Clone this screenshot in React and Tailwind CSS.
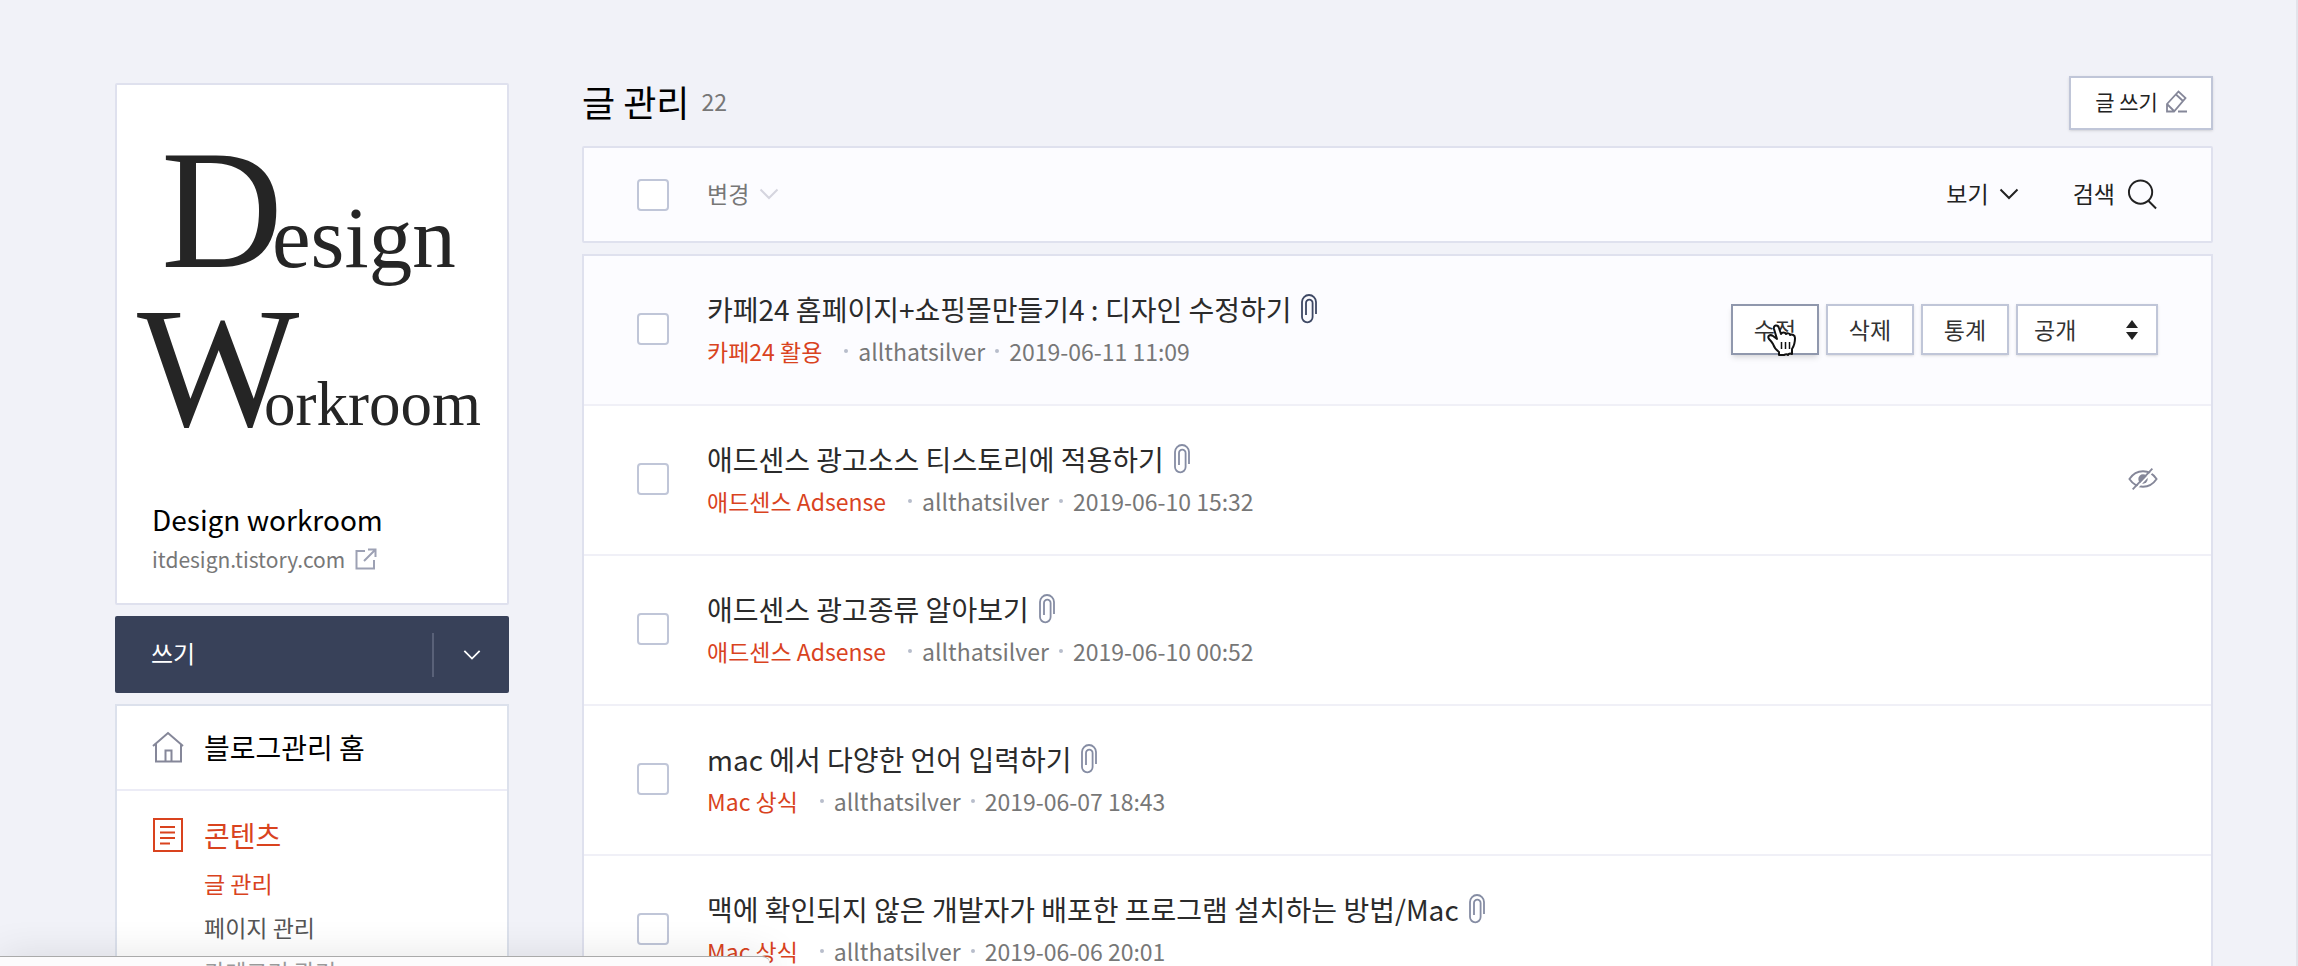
import React from "react";

const posts = [
  { title: "카페24 홈페이지+쇼핑몰만들기4 : 디자인 수정하기", category: "카페24 활용", date: "2019-06-11 11:09", active: true },
  { title: "애드센스 광고소스 티스토리에 적용하기", category: "애드센스 Adsense", date: "2019-06-10 15:32", hidden: true },
  { title: "애드센스 광고종류 알아보기", category: "애드센스 Adsense", date: "2019-06-10 00:52" },
  { title: "mac 에서 다양한 언어 입력하기", category: "Mac 상식", date: "2019-06-07 18:43" },
  { title: "맥에 확인되지 않은 개발자가 배포한 프로그램 설치하는 방법/Mac", category: "Mac 상식", date: "2019-06-06 20:01" },
];

const Chevron = ({ className }) => (
  <svg className={className} width="20" height="12" viewBox="0 0 20 12" fill="none" stroke="currentColor" strokeWidth="2">
    <path d="M1.5 1.5 10 10l8.5-8.5" />
  </svg>
);

const Clip = ({ className }) => (
  <svg className={className} width="16" height="30" viewBox="0 0 16 30" fill="none" stroke="currentColor" strokeWidth="1.8">
    <path d="M15 20V8a7 7 0 0 0-14 0v15a5.3 5.3 0 0 0 10.6 0V9a3.3 3.3 0 0 0-6.6 0v12" />
  </svg>
);

const Checkbox = ({ label }) => (
  <input
    type="checkbox"
    aria-label={label}
    className="size-8 shrink-0 appearance-none rounded border-2 border-[#c0c6d8] bg-white"
  />
);

const Dot = () => <span className="mx-2.5 size-1 rounded-full bg-[#b8bdcb]" />;

const Logo = () => (
  <svg className="block w-full overflow-visible" height="300" viewBox="0 0 390 300" fill="#252525" fontFamily="'Liberation Serif', serif">
    <text x="44" y="122" fontSize="169">D</text>
    <text x="155" y="122" fontSize="87">esign</text>
    <text x="20" y="280" fontSize="172">W</text>
    <text x="147" y="280" fontSize="63">orkroom</text>
  </svg>
);

const Hand = () => (
  <svg className="pointer-events-none absolute top-5 left-9" width="30" height="32" viewBox="0 0 30 32" fill="white" stroke="#111" strokeWidth="2" strokeLinejoin="round">
    <path d="M12 31v-3c-3-2-5-5-6-8-1-2-3-4-4-5-2-3 1-5 4-3l4 3L7 5c-1-4 4-5 5-1l2 6c1-2 4-2 5 0 1-1 4-1 4 1 2-1 5 0 5 3 0 5-1 8-3 11v5c-2-1-3-1-4 1-1-1-2-1-4 0z" />
    <path d="M14.500 18v7M18.500 18v7M22.500 18v7" strokeWidth="1.500" />
  </svg>
);

const actionClass =
  "h-[51px] w-22 border-2 border-[#c0c6d8] bg-white text-[23px] leading-8 text-[#333] shadow-sm";

const Actions = () => (
  <div className="flex gap-[7px]">
    <div className="relative">
      <button className="h-[51px] w-22 border-2 border-[#9098ad] bg-white text-[23px] leading-8 text-[#333] shadow-md">수정</button>
      <Hand />
    </div>
    <button className={actionClass}>삭제</button>
    <button className={actionClass}>통계</button>
    <div className="relative">
      <select aria-label="공개 설정" className="h-[51px] w-[142px] appearance-none border-2 border-[#c0c6d8] bg-white pl-4 text-[23px] leading-8 text-[#333] shadow-sm">
        <option>공개</option>
      </select>
      <svg className="pointer-events-none absolute top-4 right-5" width="12" height="20" viewBox="0 0 12 20" fill="#222">
        <path d="M6 0l6 8H0zM6 20l6-8H0z" />
      </svg>
    </div>
  </div>
);

const EyeOff = () => (
  <svg width="30" height="24" viewBox="0 0 32 24" fill="none" stroke="#858799" strokeWidth="2">
    <path d="M1.5 12C9 1 23 1 30.5 12 23 23 9 23 1.5 12z" />
    <circle cx="16" cy="12" r="5" fill="#858799" stroke="none" />
    <path d="M7 24 28 2" stroke="white" strokeWidth="2" />
    <path d="M5 23 26 1" />
  </svg>
);

const Sidebar = () => (
  <aside className="mt-[83px] w-[394px] shrink-0">
    <section className="h-[522px] rounded-xs border-2 border-[#dfe1ee] bg-white pt-[60px]">
      <Logo />
      <div className="px-[35px] pt-[52px]">
        <h2 className="text-[28px] leading-11 text-black">Design workroom</h2>
        <a href="#blog" className="flex items-center gap-2.5 text-[21px] leading-9 text-[#777]">
          itdesign.tistory.com
          <svg width="22" height="22" viewBox="0 0 22 22" fill="none" stroke="#9da1b4" strokeWidth="2">
            <path d="M10 3H1.5v17.5H19V12M13 1.5h7.5V9M20 2 9 13" />
          </svg>
        </a>
      </div>
    </section>

    <div className="mt-[11px] flex h-[77px] items-center rounded-xs bg-[#384159] text-white">
      <button className="flex-1 pb-1 pl-[36px] text-left text-[24px]">쓰기</button>
      <button aria-label="더보기" className="flex h-11 w-[77px] items-center justify-center border-l-2 border-[#596178]">
        <Chevron className="w-[18px]" />
      </button>
    </div>

    <nav className="mt-[11px] h-[280px] border-2 border-[#dce1ec] bg-white">
      <a href="#home" className="flex h-[85px] items-center gap-5 border-b-2 border-[#ececf6] pb-0.5 pl-[35px] text-[28px] text-black">
        <svg width="32" height="32" viewBox="0 0 32 32" fill="none" stroke="#858799" strokeWidth="2">
          <path d="M1 15 16 2l15 13M4 13v17.5h25V13M13.5 30V19.5h6V30" />
        </svg>
        블로그관리 홈
      </a>
      <a href="#contents" className="mt-[22px] flex h-11 items-center gap-5 pl-[35px] text-[28px] text-[#d9431e]">
        <svg width="32" height="34" viewBox="0 0 32 34" fill="none" stroke="currentColor" strokeWidth="2">
          <path d="M2 1h28v32H2zM8 9h15M8 14.5h15M8 20h15M8 25.5h10" />
        </svg>
        콘텐츠
      </a>
      <ul className="pt-1 pl-[87px] text-[23px] leading-11 text-[#555]">
        <li><a href="#posts" className="text-[#d9431e]">글 관리</a></li>
        <li><a href="#pages">페이지 관리</a></li>
        <li><a href="#categories" className="relative z-10 text-[#999]">카테고리 관리</a></li>
      </ul>
    </nav>
  </aside>
);

const PostRow = ({ post }) => (
  <li className={`flex h-[150px] items-center border-b-2 border-[#f0f0f7] px-[53px] pb-0.5 ${post.active ? "bg-[#fcfcff]" : "bg-white"}`}>
    <Checkbox label={post.title} />
    <div className="ml-[38px] flex-1">
      <a href="#post" className="flex h-11 items-center gap-2.5 text-[28px] text-[#2b2b2b]">
        {post.title}
        <Clip className={post.active ? "text-[#3e4864]" : "text-[#858ca3]"} />
      </a>
      <p className="flex h-10 items-center text-[23px] text-[#777]">
        <a href="#category" className="mr-3 text-[#d9431e]">{post.category}</a>
        <Dot />
        allthatsilver
        <Dot />
        {post.date}
      </p>
    </div>
    {post.active && <Actions />}
    {post.hidden && <EyeOff />}
  </li>
);

const App = () => (
  <div className="relative h-screen overflow-hidden border-r-2 border-[#e3e3ea] bg-[#f1f2f8] font-['Noto_Sans_CJK_KR',sans-serif]">
    <div className="flex items-start gap-[73px] pr-[83px] pl-[115px]">
      <Sidebar />
      <main className="flex-1">
        <header className="mt-[75px] flex h-[55px] items-center justify-between">
          <h1 className="flex items-center gap-3 pb-1 text-[36px] leading-[52px] text-black">
            글 관리 <span className="text-[23px]/8 text-[#777]">22</span>
          </h1>
          <button className="flex h-[54px] w-[144px] items-center justify-center gap-2 border-2 border-[#c0c6d8] bg-white pb-0.5 text-[21px] text-[#222] shadow-sm">
            글 쓰기
            <svg width="21" height="23" viewBox="0 0 21 23" fill="none" stroke="#858799" strokeWidth="1.800">
              <path d="M1 21.500V14L12.500 1.500l7 6.500L8 21.500zM10 4.500l7 6.500M1.500 14.500l6.500 6.500M12 21.500h9" />
            </svg>
          </button>
        </header>

        <div className="mt-4 flex h-[97px] items-center rounded-xs border-2 border-[#dfe1ee] bg-[#fcfcff] px-[53px] text-[23px]">
          <Checkbox label="전체 선택" />
          <button className="ml-[38px] flex items-center gap-2.5 pb-0.5 text-[#777]">
            변경 <Chevron className="text-[#d5d5df]" />
          </button>
          <button className="ml-auto flex items-center gap-2.5 pb-0.5 text-[#222]">
            보기 <Chevron />
          </button>
          <button className="ml-[54px] flex items-center gap-3 pb-0.5 text-[#222]">
            검색
            <svg width="31" height="32" viewBox="0 0 32 32" fill="none" stroke="currentColor" strokeWidth="2">
              <circle cx="14" cy="14" r="12" />
              <path d="m22 23 8 8" />
            </svg>
          </button>
        </div>

        <ul className="mt-[11px] border-2 border-[#dfe1ee] bg-white">
          {posts.map((post) => (
            <PostRow key={post.title} post={post} />
          ))}
        </ul>
      </main>
    </div>
    <div className="pointer-events-none absolute bottom-0 left-0 h-[10px] w-[770px] rounded-tr-lg border-t border-[#aaa] bg-[#fcfbfc] shadow-[0_8px_40px_rgba(0,0,0,0.3)]" />
  </div>
);

export default App;
